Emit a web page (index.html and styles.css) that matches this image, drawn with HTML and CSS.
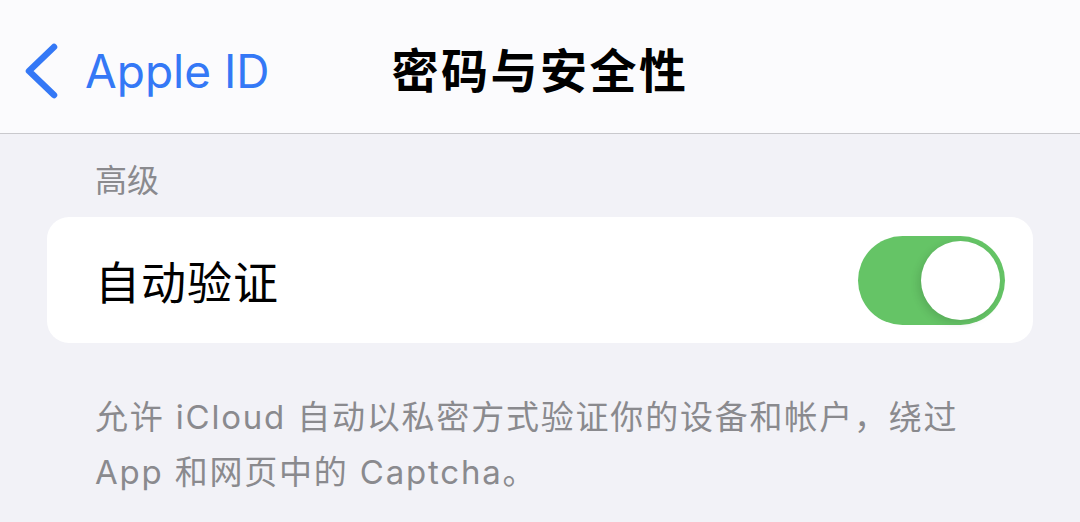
FILE: index.html
```html
<!DOCTYPE html>
<html lang="zh-CN">
<head>
<meta charset="utf-8">
<link rel="stylesheet" href="styles.css">
</head>
<body>
<header class="nav">
  <div class="back">
    <svg class="chev" width="36" height="56" viewBox="0 0 36 56"><path d="M31 4 L6 28 L31 52" fill="none" stroke="#3478f6" stroke-width="6.5" stroke-linecap="round" stroke-linejoin="round"/></svg>
    <span class="back-label">Apple ID</span>
  </div>
  <h1 class="title">密码与安全性</h1>
</header>
<main class="content">
  <div class="section-header">高级</div>
  <div class="card">
    <span class="row-label">自动验证</span>
    <div class="toggle"><div class="knob"></div></div>
  </div>
  <p class="footer">允许 iCloud 自动以私密方式验证你的设备和帐户，绕过 App 和网页中的 Captcha。</p>
</main>
</body>
</html>
```
FILE: styles.css
```css
html, body {
  margin: 0;
  padding: 0;
}
body {
  width: 1080px;
  height: 522px;
  overflow: hidden;
  background: #f2f2f7;
  font-family: "Inter", "Noto Sans CJK SC", sans-serif;
}
.nav {
  position: relative;
  height: 133px;
  background: #fbfbfd;
  border-bottom: 1px solid #c9c9cd;
  display: flex;
  align-items: center;
  justify-content: center;
}
.back {
  position: absolute;
  left: 23px;
  top: 43px;
  display: flex;
  align-items: center;
  gap: 26px;
}
.chev {
  display: block;
}
.back-label {
  color: #3478f6;
  font-size: 46px;
  line-height: 56px;
}
.title {
  margin: 0;
  font-family: "Noto Sans CJK SC", sans-serif;
  font-weight: 700;
  font-size: 47px;
  letter-spacing: 2.5px;
  line-height: 56px;
  color: #000;
  padding-top: 2px;
}
.content {
  padding: 0 47px;
}
.section-header {
  font-family: "Noto Sans CJK SC", sans-serif;
  color: #8a8a8e;
  font-size: 32px;
  line-height: 40px;
  margin-top: 24px;
  padding-left: 48px;
}
.card {
  margin-top: 19px;
  height: 126px;
  background: #fff;
  border-radius: 22px;
  display: flex;
  align-items: center;
  justify-content: space-between;
  padding: 0 28px 0 48px;
}
.row-label {
  font-family: "Noto Sans CJK SC", sans-serif;
  font-size: 45px;
  color: #000;
  letter-spacing: 1px;
}
.toggle {
  width: 147px;
  height: 89px;
  border-radius: 45px;
  background: #65c466;
  display: flex;
  align-items: center;
  justify-content: flex-end;
  padding: 0 5px;
  box-sizing: border-box;
}
.knob {
  width: 79px;
  height: 79px;
  border-radius: 50%;
  background: #fff;
  box-shadow: -3px 3px 8px rgba(0,0,0,0.12);
}
.footer {
  margin: 0;
  padding: 47px 48px 0 48px;
  color: #8a8a8e;
  font-size: 33px;
  line-height: 55px;
  letter-spacing: 1.8px;
}
```
